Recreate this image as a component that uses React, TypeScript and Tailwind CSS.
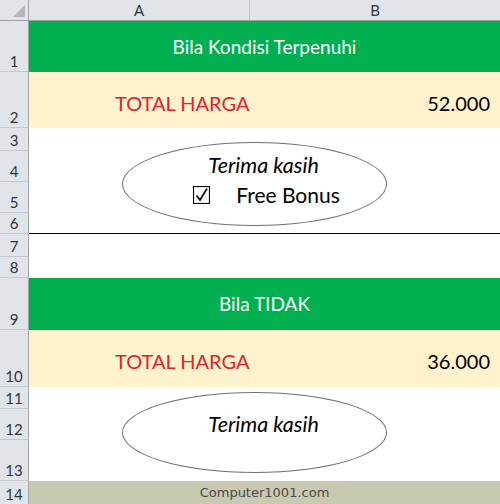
import React from "react";

const HDR = "w-[29px] shrink-0 bg-[#e1e4e9] border-r border-r-[#a3a7ad] border-b border-b-[#c4c8ce] flex items-end justify-center text-[15px] leading-[18px] text-[#2f3640] pb-[1px]";

function RowHead({ n }: { n: number }) {
  return <div className={HDR}>{n}</div>;
}

function CheckBox() {
  return (
    <svg width="17" height="18" viewBox="0 0 17 18" className="shrink-0">
      <rect x="0.5" y="0.5" width="16" height="17" fill="none" stroke="#000" strokeWidth="1.2" />
      <path d="M3.5 9.5 L7 14 L14 2.5" fill="none" stroke="#000" strokeWidth="1.6" />
    </svg>
  );
}

export default function App() {
  return (
    <div className="w-[500px] h-[504px] overflow-hidden bg-white font-['Lato',sans-serif]">
      {/* column header */}
      <div className="flex h-[21px] bg-[#e1e4e9] border-b border-b-[#9c9ea2]">
        <div className="w-[29px] shrink-0 border-r border-r-[#a3a7ad] relative">
          <div className="absolute right-[3px] bottom-[3px] w-0 h-0 border-l-[12px] border-l-transparent border-b-[12px] border-b-[#b4b8bd]" />
        </div>
        <div className="w-[221px] shrink-0 border-r border-r-[#c4c8ce] flex items-center justify-center text-[15px] text-[#2f3640]">A</div>
        <div className="flex-1 flex items-center justify-center text-[15px] text-[#2f3640]">B</div>
      </div>

      {/* row 1 */}
      <div className="flex h-[51px]">
        <RowHead n={1} />
        <div className="flex-1 bg-[#00b050] flex items-center justify-center text-white text-[19px] pt-[1px]">
          Bila Kondisi Terpenuhi
        </div>
      </div>

      {/* row 2 */}
      <div className="flex h-[56px]">
        <RowHead n={2} />
        <div className="flex-1 bg-[#fff2cc] flex items-center justify-between pl-[86px] pr-[10px] pt-[5px] text-[20px]">
          <span className="text-[#e0242c]">TOTAL HARGA</span>
          <span className="text-black">52.000</span>
        </div>
      </div>

      {/* rows 3-6 with ellipse */}
      <div className="relative">
        <div className="flex h-[23px]"><RowHead n={3} /><div className="flex-1" /></div>
        <div className="flex h-[31px]"><RowHead n={4} /><div className="flex-1" /></div>
        <div className="flex h-[31px]"><RowHead n={5} /><div className="flex-1" /></div>
        <div className="flex h-[21px]"><RowHead n={6} /><div className="flex-1 border-b border-b-black" /></div>
        <div className="absolute left-[122px] top-[14px] w-[265px] h-[84px] rounded-[50%] border border-[#6f6f6f] bg-white flex flex-col items-center pt-[10px]">
          <div className="italic text-[21.5px] leading-[24px] text-black pl-[18px]">Terima kasih</div>
          <div className="flex items-center mt-[6px] pl-[24px]">
            <CheckBox />
            <span className="ml-[26px] text-[21px] leading-[24px] text-black">Free Bonus</span>
          </div>
        </div>
      </div>

      {/* rows 7-8 */}
      <div className="flex h-[23px]"><RowHead n={7} /><div className="flex-1" /></div>
      <div className="flex h-[21px]"><RowHead n={8} /><div className="flex-1" /></div>

      {/* row 9 */}
      <div className="flex h-[52px]">
        <RowHead n={9} />
        <div className="flex-1 bg-[#00b050] flex items-center justify-center text-white text-[19px] pt-[1px]">
          Bila TIDAK
        </div>
      </div>

      {/* row 10 */}
      <div className="flex h-[57px]">
        <RowHead n={10} />
        <div className="flex-1 bg-[#fff2cc] flex items-center justify-between pl-[86px] pr-[10px] pt-[5px] text-[20px]">
          <span className="text-[#e0242c]">TOTAL HARGA</span>
          <span className="text-black">36.000</span>
        </div>
      </div>

      {/* rows 11-13 with ellipse */}
      <div className="relative">
        <div className="flex h-[22px]"><RowHead n={11} /><div className="flex-1" /></div>
        <div className="flex h-[31px]"><RowHead n={12} /><div className="flex-1" /></div>
        <div className="flex h-[41px]"><RowHead n={13} /><div className="flex-1" /></div>
        <div className="absolute left-[122px] top-[5px] w-[265px] h-[81px] rounded-[50%] border border-[#6f6f6f] bg-white flex flex-col items-center pt-[19px]">
          <div className="italic text-[21.5px] leading-[24px] text-black pl-[18px]">Terima kasih</div>
        </div>
      </div>

      {/* row 14 */}
      <div className="flex h-[24px]">
        <RowHead n={14} />
        <div className="flex-1 bg-[#c9c9b1] flex items-center justify-center text-[13px] text-[#4a4a4a] font-['DejaVu_Sans',sans-serif]">
          Computer1001.com
        </div>
      </div>
    </div>
  );
}
